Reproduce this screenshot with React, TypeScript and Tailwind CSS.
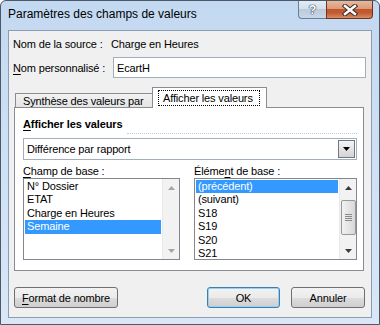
import React from 'react';

const leftItems = ['N° Dossier', 'ETAT', 'Charge en Heures', 'Semaine'];
const rightItems = ['(précédent)', '(suivant)', 'S18', 'S19', 'S20', 'S21'];

function Arrow({ dir, color }: { dir: 'up' | 'down'; color: string }) {
    return (
        <svg width="7" height="4" viewBox="0 0 7 4">
            {dir === 'up' ? <polygon points="0,4 7,4 3.5,0" fill={color} /> : <polygon points="0,0 7,0 3.5,4" fill={color} />}
        </svg>
    );
}

function ScrollBar({ thumb }: { thumb: boolean }) {
    const c = thumb ? '#3b3b3b' : '#a6a6a6';
    return (
        <div className="w-[17px] h-full bg-[#f2f2f2] flex flex-col items-center border-l border-[#e8e8e8]">
            <div className="h-[17px] flex items-center justify-center">
                <Arrow dir="up" color={c} />
            </div>
            <div className="flex-1 w-full">
                {thumb && (
                    <div className="mt-[4px] mx-auto w-[15px] h-[35px] rounded-[2px] border border-[#979797] bg-gradient-to-r from-[#f2f2f2] to-[#d8d8d8] flex flex-col items-center justify-center gap-[1px]">
                        <div className="w-[7px] h-[1px] bg-[#8a8a8a]" />
                        <div className="w-[7px] h-[1px] bg-[#8a8a8a]" />
                        <div className="w-[7px] h-[1px] bg-[#8a8a8a]" />
                        <div className="w-[7px] h-[1px] bg-[#8a8a8a]" />
                    </div>
                )}
            </div>
            <div className="h-[17px] flex items-center justify-center">
                <Arrow dir="down" color={c} />
            </div>
        </div>
    );
}

function ListBox({ items, selected, width, thumb }: { items: string[]; selected: string; width: string; thumb: boolean }) {
    return (
        <div className={`${width} h-[82px] border border-[#828790] bg-white flex`}>
            <div className="flex-1 pt-[1px] pl-[1px] pr-[1px]">
                {items.map((item) => (
                    <div
                        key={item}
                        className={`h-[13.4px] leading-[13.4px] pl-[2px] ${item === selected ? 'bg-[#3399ff] text-white' : 'text-black'}`}
                    >
                        {item}
                    </div>
                ))}
            </div>
            <ScrollBar thumb={thumb} />
        </div>
    );
}

function Button({ children, width, primary }: { children: React.ReactNode; width: string; primary?: boolean }) {
    return (
        <div
            className={`${width} h-[21px] rounded-[3px] border ${primary ? 'border-[#3c7fb1] shadow-[inset_0_0_0_1px_#98d1ef]' : 'border-[#707070]'} bg-[linear-gradient(#f2f2f2_0%,#ebebeb_50%,#dddddd_50%,#cfcfcf_100%)] flex items-center justify-center leading-[14px]`}
        >
            {children}
        </div>
    );
}

export default function App() {
    return (
        <div className="w-[380px] h-[325px] overflow-hidden bg-white">
            <div className="w-[380px] h-[325px] flex flex-col rounded-t-[6px] border border-[#4a5868] bg-gradient-to-b from-[#c3d9f1] via-[#cfe1f4] to-[#d9e7f6] font-['Liberation_Sans',Arial,sans-serif] text-[11px] tracking-[-0.15px] text-black">
                {/* title bar */}
                <div className="h-[29px] flex items-start">
                    <div className="pl-[7px] pt-[6px] text-[12px] leading-[14px] tracking-normal text-black">Paramètres des champs de valeurs</div>
                    <div className="ml-auto mr-[6px] flex">
                        <div className="w-[28px] h-[18px] rounded-bl-[4px] border border-[#6b7f96] border-t-0 border-r-0 bg-[linear-gradient(#e3ecf6_0%,#d2deeb_50%,#bccbdc_50%,#c9d8e8_100%)] flex items-center justify-center">
                            <span className="text-[13px] font-bold leading-[14px] text-white [text-shadow:0_0_1px_#26364a,0_0_1px_#26364a,0_0_1px_#26364a]">?</span>
                        </div>
                        <div className="w-[47px] h-[18px] rounded-br-[4px] border border-[#6e3322] border-t-0 bg-[linear-gradient(#e8b99c_0%,#dd9a78_45%,#c0552f_50%,#c45a32_70%,#d88d60_100%)] flex items-center justify-center">
                            <svg width="16" height="12" viewBox="0 0 16 12">
                                <path d="M3 2 L13 10 M13 2 L3 10" stroke="#3a2a2a" strokeWidth="4.5" strokeLinecap="square" />
                                <path d="M3 2 L13 10 M13 2 L3 10" stroke="#ffffff" strokeWidth="2.5" strokeLinecap="square" />
                            </svg>
                        </div>
                    </div>
                </div>

                {/* client area */}
                <div className="mx-[7px] h-[288px] border border-[#8a9db3] bg-[#f0f0f0] flex flex-col">
                    <div className="mt-[6px] pl-[4px] h-[14px] flex items-center leading-[14px]">
                        <div className="w-[98px]">Nom de la source :</div>
                        <div>Charge en Heures</div>
                    </div>

                    <div className="mt-[6px] pl-[4px] h-[21px] flex items-center leading-[14px]">
                        <div className="w-[100px]">
                            <span className="underline underline-offset-[2px]">N</span>om personnalisé :
                        </div>
                        <div className="w-[253px] h-[21px] border border-[#a3aebb] bg-white flex items-center pl-[3px]">EcartH</div>
                    </div>

                    {/* tabs */}
                    <div className="mt-[9px] ml-[6px] h-[21px] flex items-end">
                        <div className="w-[138px] h-[15px] border border-b-0 border-[#898c95] bg-gradient-to-b from-[#f2f2f2] to-[#e3e3e3] pl-[7px] leading-[14px]">
                            Synthèse des valeurs par
                        </div>
                        <div className="relative z-10 -ml-[1px] w-[115px] h-[21px] border border-b-0 border-[#898c95] bg-white pt-[2px] pl-[5px]">
                            <div className="w-[102px] h-[16px] border border-dotted border-black pl-[4px] leading-[14px]">Afficher les valeurs</div>
                        </div>
                    </div>

                    {/* panel */}
                    <div className="-mt-[1px] ml-[5px] w-[350px] h-[164px] border border-[#898c95] bg-white pl-[8px] pr-[6px] pt-[9px]">
                        <div className="h-[17px] flex">
                            <div className="font-bold leading-[14px] tracking-[-0.1px]">
                                <span className="underline underline-offset-[2px]">A</span>fficher les valeurs
                            </div>
                            <div className="flex-1 self-end ml-[4px] border-b border-dotted border-[#b8cde3]" />
                        </div>

                        <div className="mt-[4px] h-[22px] border border-[#a3aebb] bg-white flex items-center pr-[1px]">
                            <div className="flex-1 pl-[3px] leading-[14px]">Différence par rapport</div>
                            <div className="w-[17px] h-[18px] border border-[#707a86] bg-gradient-to-b from-[#f4f4f4] to-[#d4d4d4] flex items-center justify-center">
                                <svg width="7" height="4" viewBox="0 0 7 4">
                                    <polygon points="0,0 7,0 3.5,4" fill="#000" />
                                </svg>
                            </div>
                        </div>

                        <div className="mt-[4px] h-[14px] flex leading-[14px]">
                            <div className="w-[171px]">
                                <span className="underline underline-offset-[2px]">C</span>hamp de base :
                            </div>
                            <div>
                                Éléme<span className="underline underline-offset-[2px]">n</span>t de base :
                            </div>
                        </div>

                        <div className="flex gap-[14px]">
                            <ListBox items={leftItems} selected="Semaine" width="w-[157px]" thumb={false} />
                            <ListBox items={rightItems} selected="(précédent)" width="w-[163px]" thumb={true} />
                        </div>
                    </div>

                    {/* buttons */}
                    <div className="mt-[16px] flex">
                        <div className="ml-[5px]">
                            <Button width="w-[104px]">
                                <span className="underline underline-offset-[2px]">F</span>ormat de nombre
                            </Button>
                        </div>
                        <div className="ml-auto mr-[6px] flex gap-[11px]">
                            <Button width="w-[73px]" primary>
                                OK
                            </Button>
                            <Button width="w-[74px]">Annuler</Button>
                        </div>
                    </div>
                </div>
            </div>
        </div>
    );
}
